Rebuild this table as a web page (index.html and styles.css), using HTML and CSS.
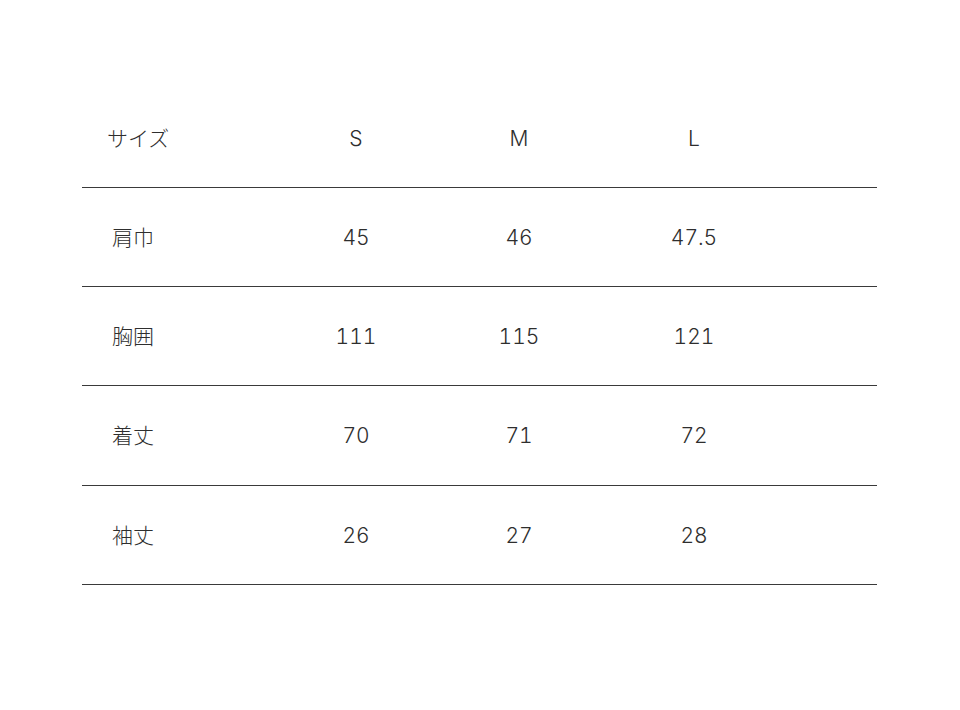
FILE: index.html
```html
<!DOCTYPE html>
<html lang="ja">
<head>
<meta charset="utf-8">
<link rel="stylesheet" href="styles.css">
</head>
<body>
<div class="page">
  <div class="table">
    <div class="row head">
      <div class="cell label">サイズ</div>
      <div class="cell">S</div>
      <div class="cell">M</div>
      <div class="cell">L</div>
      <div class="cell"></div>
    </div>
    <div class="row">
      <div class="cell label">肩巾</div>
      <div class="cell">45</div>
      <div class="cell">46</div>
      <div class="cell">47.5</div>
      <div class="cell"></div>
    </div>
    <div class="row">
      <div class="cell label">胸囲</div>
      <div class="cell">111</div>
      <div class="cell">115</div>
      <div class="cell">121</div>
      <div class="cell"></div>
    </div>
    <div class="row tall">
      <div class="cell label">着丈</div>
      <div class="cell">70</div>
      <div class="cell">71</div>
      <div class="cell">72</div>
      <div class="cell"></div>
    </div>
    <div class="row">
      <div class="cell label">袖丈</div>
      <div class="cell">26</div>
      <div class="cell">27</div>
      <div class="cell">28</div>
      <div class="cell"></div>
    </div>
  </div>
</div>
</body>
</html>
```
FILE: styles.css
```css
html, body {
  margin: 0;
  padding: 0;
  background: #ffffff;
}
body {
  font-family: Inter, "Noto Sans CJK JP", "Noto Sans", sans-serif;
  font-weight: 300;
  font-size: 21px;
  font-variant-numeric: tabular-nums;
  color: #2e2e2e;
}
.page {
  padding: 89px 83px 0 82px;
}
.table {
  display: flex;
  flex-direction: column;
  width: 795px;
}
.row {
  display: grid;
  grid-template-columns: 193px 162px 164px 186px 1fr;
  height: 98px;
  align-items: center;
  border-bottom: 1px solid #3a3a3a;
}
.row.tall {
  height: 99px;
}
.cell {
  text-align: center;
  line-height: 1;
}
.cell.label {
  font-family: "Noto Sans CJK JP", sans-serif;
  text-align: left;
  padding-left: 30px;
  margin-top: -2px;
}
.head .cell.label {
  padding-left: 25px;
}
```
